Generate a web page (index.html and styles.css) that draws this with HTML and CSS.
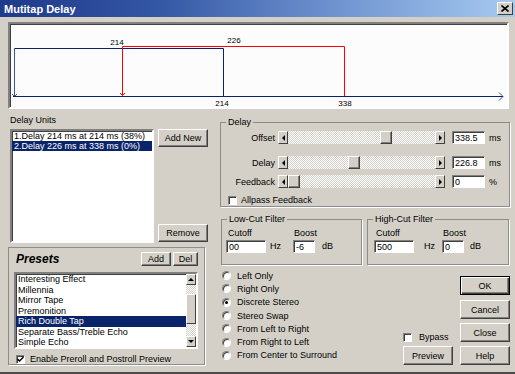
FILE: index.html
```html
<!DOCTYPE html>
<html lang="en">
<head>
  <meta charset="UTF-8">
  <title>Mutitap Delay</title>
  <link rel="stylesheet" href="styles.css">
</head>
<body>

  <div class="window">
    <!-- Title bar -->
    <div class="titlebar">
      <span class="title">Mutitap Delay</span>
      <span class="close-btn">
        <svg width="8" height="7" viewBox="0 0 8 7"><path d="M0.5 0.5L7.5 6.5M7.5 0.5L0.5 6.5" stroke="#000" stroke-width="1.6"/></svg>
      </span>
    </div>

    <!-- Delay graph -->
    <div class="graph">
      <svg class="graph-svg" width="497" height="83" viewBox="0 0 497 83">
        <g fill="none" stroke-width="1">
          <path d="M4.5 24.5H213.5V72" stroke="#0a1f6e"/>
          <path d="M4.5 24.5V72" stroke="#3a56a8"/>
          <path d="M2 70l2.5 2.5 2.5-2.5" stroke="#3a56a8"/>
          <path d="M112.5 22.5H334.5V72" stroke="#f00"/>
          <path d="M112.5 22.5V71.5" stroke="#f00"/>
          <path d="M110 69l2.5 2.5 2.5-2.5" stroke="#f00"/>
          <path d="M3 72.5H493" stroke="#0a1f6e"/>
          <path d="M489 68.5l4 4-4 4" stroke="#3a56a8"/>
        </g>
        <g class="graph-text">
          <text x="107" y="21">214</text>
          <text x="224" y="19">226</text>
          <text x="212" y="82">214</text>
          <text x="335" y="82">338</text>
        </g>
      </svg>
    </div>

    <div class="body">
      <!-- Left column -->
      <div class="left">
        <div class="units">
          <div class="caption">Delay Units</div>
          <div class="units-row">
            <div class="listbox units-list">
              <div class="item">1.Delay 214 ms at 214 ms (38%)</div>
              <div class="item selected">2.Delay 226 ms at 338 ms (0%)</div>
            </div>
            <div class="units-buttons">
              <button class="btn">Add New</button>
              <button class="btn">Remove</button>
            </div>
          </div>
        </div>

        <div class="presets">
          <div class="presets-head">
            <span class="presets-title">Presets</span>
            <button class="btn btn-add">Add</button>
            <button class="btn btn-del">Del</button>
          </div>
          <div class="listbox presets-list">
            <div class="presets-items">
              <div class="item">Interesting Effect</div>
              <div class="item">Millennia</div>
              <div class="item">Mirror Tape</div>
              <div class="item">Premonition</div>
              <div class="item selected">Rich Double Tap</div>
              <div class="item">Separate Bass/Treble Echo</div>
              <div class="item">Simple Echo</div>
            </div>
            <div class="vscroll">
              <span class="arrow arrow-up"></span>
              <span class="vtrack"><span class="vthumb"></span></span>
              <span class="arrow arrow-down"></span>
            </div>
          </div>
          <div class="check-row enable-row">
            <span class="checkbox checked">
              <svg width="7" height="7" viewBox="0 0 7 7"><path d="M0.5 3l2 2 4-4" fill="none" stroke="#000" stroke-width="1.4"/></svg>
            </span>
            <span>Enable Preroll and Postroll Preview</span>
          </div>
        </div>
      </div>

      <!-- Right column -->
      <div class="right">
        <fieldset class="group delay-group">
          <legend>Delay</legend>
          <div class="slider-row row-offset">
            <span class="slabel">Offset</span>
            <div class="hscroll">
              <span class="arrow arrow-left"></span>
              <span class="htrack"><span class="hthumb" style="margin-left: 92px"></span></span>
              <span class="arrow arrow-right"></span>
            </div>
            <span class="textbox value">338.5</span>
            <span class="unit">ms</span>
          </div>
          <div class="slider-row row-delay">
            <span class="slabel">Delay</span>
            <div class="hscroll">
              <span class="arrow arrow-left"></span>
              <span class="htrack"><span class="hthumb" style="margin-left: 60px"></span></span>
              <span class="arrow arrow-right"></span>
            </div>
            <span class="textbox value">226.8</span>
            <span class="unit">ms</span>
          </div>
          <div class="slider-row row-feedback">
            <span class="slabel">Feedback</span>
            <div class="hscroll">
              <span class="arrow arrow-left"></span>
              <span class="htrack"><span class="hthumb" style="margin-left: 0px"></span></span>
              <span class="arrow arrow-right"></span>
            </div>
            <span class="textbox value">0</span>
            <span class="unit">%</span>
          </div>
          <div class="check-row allpass-row">
            <span class="checkbox"></span>
            <span>Allpass Feedback</span>
          </div>
        </fieldset>

        <div class="filters">
          <fieldset class="group filter lowcut">
            <legend>Low-Cut Filter</legend>
            <div class="filter-row">
              <div class="field f-cutoff"><span class="flabel">Cutoff</span><span class="textbox">00</span></div>
              <span class="funit u-hz">Hz</span>
              <div class="field f-boost"><span class="flabel">Boost</span><span class="textbox">-6</span></div>
              <span class="funit u-db">dB</span>
            </div>
          </fieldset>
          <fieldset class="group filter highcut">
            <legend>High-Cut Filter</legend>
            <div class="filter-row">
              <div class="field f-cutoff"><span class="flabel">Cutoff</span><span class="textbox">500</span></div>
              <span class="funit u-hz">Hz</span>
              <div class="field f-boost"><span class="flabel">Boost</span><span class="textbox">0</span></div>
              <span class="funit u-db">dB</span>
            </div>
          </fieldset>
        </div>

        <div class="bottom">
          <div class="radios">
            <div class="radio-row"><span class="radio"></span>Left Only</div>
            <div class="radio-row"><span class="radio"></span>Right Only</div>
            <div class="radio-row"><span class="radio on"></span>Discrete Stereo</div>
            <div class="radio-row"><span class="radio"></span>Stereo Swap</div>
            <div class="radio-row"><span class="radio"></span>From Left to Right</div>
            <div class="radio-row"><span class="radio"></span>From Right to Left</div>
            <div class="radio-row"><span class="radio"></span>From Center to Surround</div>
          </div>
          <div class="mid-col">
            <div class="check-row bypass-row">
              <span class="checkbox"></span>
              <span>Bypass</span>
            </div>
            <button class="btn btn-tall">Preview</button>
          </div>
          <div class="btn-col">
            <button class="btn btn-tall btn-default">OK</button>
            <button class="btn btn-tall btn-cancel">Cancel</button>
            <button class="btn btn-tall">Close</button>
            <button class="btn btn-tall">Help</button>
          </div>
        </div>
      </div>
    </div>
  </div>

</body>
</html>
```

FILE: styles.css
```css
* {
  box-sizing: border-box;
}
body {
  margin: 0;
  font-family: "Liberation Sans", Arial, sans-serif;
  font-size: 9px;
  color: #000;
}
.window {
  width: 515px;
  height: 374px;
  background-color: #d4d0c8;
  border-bottom: 2px solid #4a4a4a;
  overflow: hidden;
}

/* title bar */
.titlebar {
  height: 17px;
  display: flex;
  align-items: center;
  justify-content: space-between;
  padding: 0 2px 0 4px;
  background: linear-gradient(90deg, #1e3a8a 0%, #3356a4 30%, #6a8ecc 62%, #a6caf0 100%);
}
.title {
  color: #fff;
  font-weight: bold;
  font-size: 11px;
}
.close-btn {
  width: 16px;
  height: 13px;
  display: flex;
  align-items: center;
  justify-content: center;
  background-color: #d4d0c8;
  border: 1px solid;
  border-color: #fff #404040 #404040 #fff;
}

/* graph */
.graph {
  margin: 5px 6px 0 8px;
  height: 87px;
  border: 2px solid;
  border-color: #808080 #fff #fff #808080;
  box-shadow: inset 1px 1px #404040;
  background-color: #fcfcfc;
}
.graph-svg {
  display: block;
}
.graph-text text {
  font-family: "Liberation Sans", Arial, sans-serif;
  font-size: 8px;
  text-anchor: middle;
  fill: #000;
}

/* common widgets */
.btn {
  display: flex;
  align-items: center;
  justify-content: center;
  padding: 0;
  font-family: inherit;
  font-size: 9px;
  color: #000;
  background-color: #d4d0c8;
  border: 1px solid;
  border-color: #fff #404040 #404040 #fff;
  box-shadow: inset -1px -1px #808080;
}
.btn-default {
  border: 1px solid #000;
  box-shadow: inset 1px 1px #fff, inset -1px -1px #404040, inset -2px -2px #808080;
}
.listbox {
  background-color: #fff;
  border: 2px solid;
  border-color: #808080 #fff #fff #808080;
  box-shadow: inset 1px 1px #404040;
}
.item {
  padding: 0 2px;
  line-height: 10px;
  white-space: nowrap;
}
.item.selected {
  background-color: #0a246a;
  color: #fff;
}
.textbox {
  display: flex;
  align-items: center;
  height: 13px;
  padding-left: 2px;
  background-color: #fff;
  border: 1px solid;
  border-color: #808080 #fff #fff #808080;
  box-shadow: inset 1px 1px #404040;
}
.checkbox {
  width: 9px;
  height: 9px;
  display: flex;
  align-items: center;
  justify-content: center;
  background-color: #fff;
  border: 1px solid;
  border-color: #808080 #fff #fff #808080;
  box-shadow: inset 1px 1px #404040;
}
.check-row {
  display: flex;
  align-items: center;
  white-space: nowrap;
}
.arrow {
  width: 10px;
  height: 13px;
  display: flex;
  align-items: center;
  justify-content: center;
  background-color: #d4d0c8;
  border: 1px solid;
  border-color: #fff #404040 #404040 #fff;
}
.arrow::before {
  content: "";
  border: 3px solid transparent;
}
.arrow-left::before {
  border-right-color: #000;
  border-left-width: 0;
}
.arrow-right::before {
  border-left-color: #000;
  border-right-width: 0;
}
.arrow-up::before {
  border-bottom-color: #000;
  border-top-width: 0;
}
.arrow-down::before {
  border-top-color: #000;
  border-bottom-width: 0;
}
.group {
  margin: 0;
  padding: 0;
  border: 1px solid #8c8c8c;
  box-shadow: 1px 1px #fff;
}
.group legend {
  margin-left: 5px;
  padding: 0 2px;
  line-height: 11px;
}

/* layout */
.body {
  display: flex;
  padding-left: 8px;
}
.left {
  width: 204px;
}
.right {
  width: 290px;
  margin-left: 8px;
}

/* delay units */
.units {
  padding-left: 2px;
}
.caption {
  margin-top: 6px;
  margin-bottom: 3px;
  line-height: 11px;
}
.units-row {
  display: flex;
  height: 114px;
}
.units-list {
  width: 144px;
}
.units-buttons {
  width: 50px;
  margin-left: 4px;
  display: flex;
  flex-direction: column;
  justify-content: space-between;
  padding-bottom: 1px;
}
.units-buttons .btn {
  height: 18px;
}

/* presets */
.presets {
  width: 197px;
  height: 118px;
  margin-top: 4px;
  padding: 4px 6px 0 5px;
  border: 1px solid #8c8c8c;
  box-shadow: 1px 1px #fff;
}
.presets-head {
  display: flex;
  align-items: center;
  height: 14px;
  gap: 2px;
}
.presets-title {
  font-size: 12px;
  font-weight: bold;
  font-style: italic;
  margin-left: 2px;
  margin-right: auto;
}
.btn-add {
  width: 30px;
  height: 14px;
}
.btn-del {
  width: 25px;
  height: 14px;
}
.presets-list {
  display: flex;
  height: 77px;
  margin-top: 6px;
  overflow: hidden;
}
.presets-items {
  flex: 1;
}
.presets-items .item {
  line-height: 10.5px;
}
.vscroll {
  width: 10px;
  display: flex;
  flex-direction: column;
}
.vscroll .arrow {
  height: 11px;
  width: 10px;
}
.vtrack {
  flex: 1;
  padding-top: 9px;
  background: repeating-conic-gradient(#fff 0 25%, #d4d0c8 0 50%) 0 0 / 2px 2px;
}
.vthumb {
  display: block;
  height: 30px;
  background-color: #d4d0c8;
  border: 1px solid;
  border-color: #fff #404040 #404040 #fff;
}
.enable-row {
  margin-top: 4px;
  height: 12px;
  padding-left: 2px;
  gap: 5px;
}

/* delay group */
.delay-group {
  margin-top: 8px;
  height: 90px;
}
.slider-row {
  display: flex;
  align-items: center;
  height: 13px;
}
.row-offset {
  margin-top: 3px;
}
.row-delay {
  margin-top: 12px;
}
.row-feedback {
  margin-top: 6px;
}
.slabel {
  width: 54px;
  text-align: right;
}
.hscroll {
  display: flex;
  width: 167px;
  height: 13px;
  margin-left: 3px;
}
.htrack {
  flex: 1;
  display: flex;
  background: repeating-conic-gradient(#fff 0 25%, #d4d0c8 0 50%) 0 0 / 2px 2px;
}
.hthumb {
  width: 12px;
  height: 13px;
  background-color: #d4d0c8;
  border: 1px solid;
  border-color: #fff #404040 #404040 #fff;
  box-shadow: inset -1px -1px #808080;
}
.value {
  width: 33px;
  margin-left: 7px;
}
.unit {
  margin-left: 4px;
}
.allpass-row {
  margin-top: 7px;
  margin-left: 7px;
  height: 10px;
  gap: 4px;
}

/* filters */
.filters {
  display: flex;
  gap: 5px;
  margin-top: 7px;
  margin-left: 1px;
}
.filter {
  height: 51px;
}
.lowcut {
  width: 141px;
}
.highcut {
  width: 142px;
}
.filter-row {
  display: flex;
  align-items: flex-end;
  margin-top: 3px;
  padding-left: 4px;
}
.highcut .filter-row {
  padding-left: 6px;
}
.field {
  display: flex;
  flex-direction: column;
}
.flabel {
  line-height: 10px;
  margin-bottom: 2px;
  padding-left: 2px;
}
.f-cutoff .textbox {
  width: 40px;
}
.f-boost .flabel {
  padding-left: 1px;
}
.f-boost .textbox {
  width: 22px;
}
.funit {
  line-height: 13px;
}
.u-hz {
  width: 27px;
  padding-left: 4px;
}
.highcut .u-hz {
  width: 28px;
  padding-left: 10px;
}
.u-db {
  margin-left: 5px;
}
.highcut .u-db {
  margin-left: 4px;
}

/* bottom area */
.bottom {
  display: flex;
  height: 100px;
}
.radios {
  flex: 1;
  padding-top: 4px;
  padding-left: 2px;
}
.radio-row {
  display: flex;
  align-items: center;
  height: 13.3px;
  white-space: nowrap;
}
.radio {
  width: 9px;
  height: 9px;
  margin-right: 6px;
  border-radius: 50%;
  display: flex;
  align-items: center;
  justify-content: center;
  background-color: #fff;
  border: 1px solid;
  border-color: #808080 #fff #fff #808080;
  box-shadow: inset 1px 1px #404040;
}
.radio.on::after {
  content: "";
  width: 3px;
  height: 3px;
  border-radius: 50%;
  background-color: #000;
}
.mid-col {
  width: 50px;
  margin-right: 7px;
  display: flex;
  flex-direction: column;
  justify-content: flex-end;
}
.bypass-row {
  height: 10px;
  margin-bottom: 4px;
  gap: 7px;
}
.btn-col {
  width: 50px;
  padding-top: 11px;
  display: flex;
  flex-direction: column;
  gap: 4px;
}
.btn-tall {
  height: 19px;
}
.btn-cancel {
  margin-top: 1px;
}
```
